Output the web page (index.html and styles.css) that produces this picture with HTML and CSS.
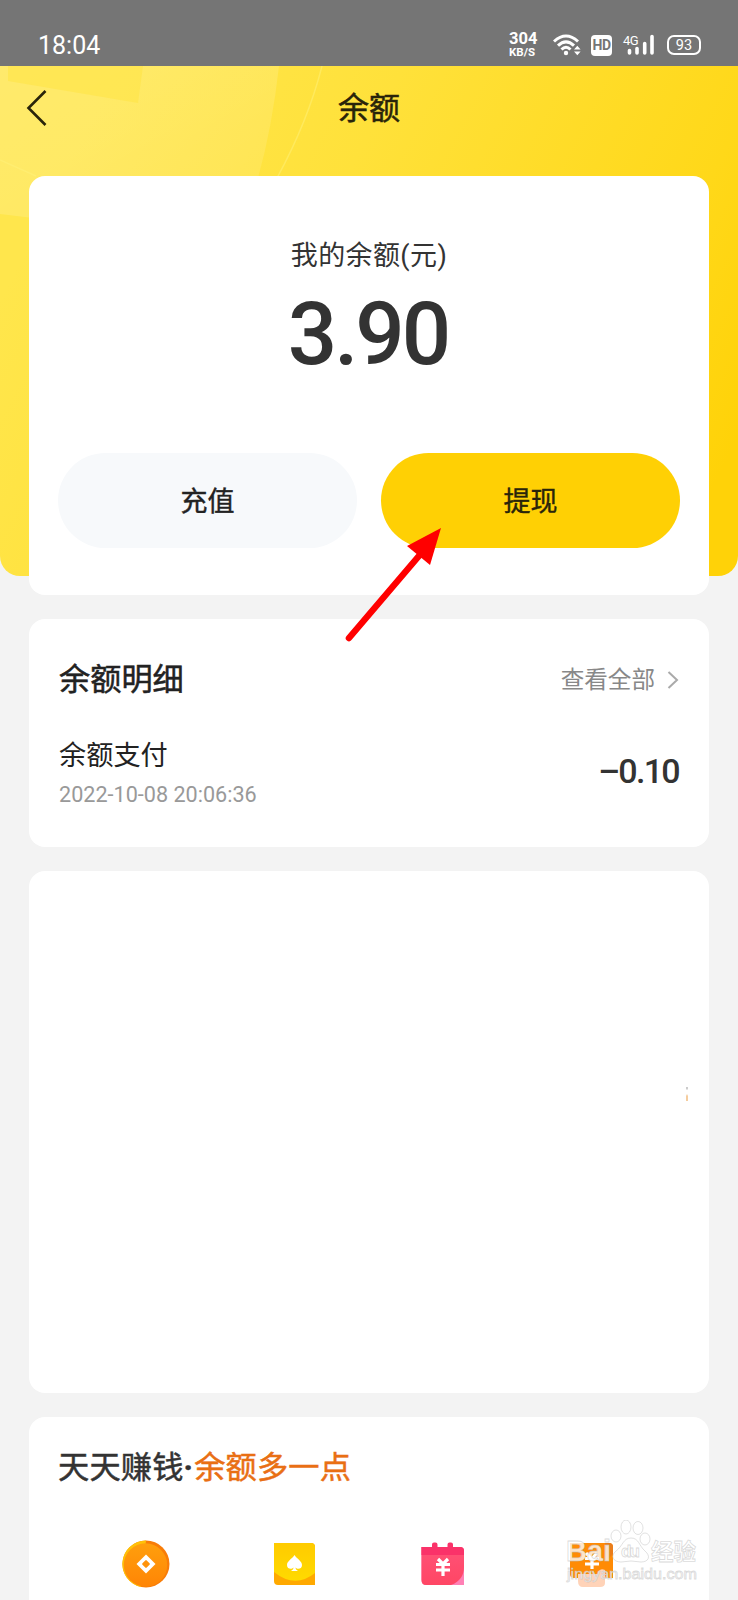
FILE: index.html
```html
<!DOCTYPE html>
<html lang="zh-CN">
<head>
<meta charset="utf-8">
<title>余额</title>
<link rel="stylesheet" href="styles.css">
</head>
<body>
<div class="screen">
  <header class="status">
    <span class="clock">18:04</span>
    <div class="speed"><b class="rate">304</b><b class="unit">KB/S</b></div>
    <svg class="wifi" width="28" height="24" viewBox="0 0 28 24" fill="none" stroke="#fff" stroke-width="3">
      <path d="M1 8.500Q13 -2.500 25 8.500M5 12.700Q13 5 21 12.700M8.500 16.500Q13 12 17.500 16.500"/>
      <circle cx="13" cy="20" r="2.200" fill="#fff" stroke="none"/>
      <path d="M21 16.500L24.300 12.800L27.600 16.500ZM21 18.500L24.300 22.200L27.600 18.500Z" fill="#fff" stroke="none"/>
    </svg>
    <span class="hd">HD</span>
    <div class="signal">
      <span class="net">4G</span>
      <svg width="30" height="22" viewBox="0 0 30 22" stroke="#fff" stroke-width="3.600" stroke-linecap="round"><path d="M5.500 16.500V19M13 14.500V19M20.700 9.500V19M28 2.500V19"/></svg>
    </div>
    <div class="battery">93</div>
  </header>

  <main class="page">
    <svg class="backdrop" width="738" height="510" viewBox="0 0 738 510">
      <defs>
        <linearGradient id="gold" gradientUnits="userSpaceOnUse" x1="120" y1="0" x2="760" y2="330">
          <stop offset="0" stop-color="#ffe64c"/><stop offset=".35" stop-color="#ffe13a"/><stop offset=".8" stop-color="#ffd819"/><stop offset="1" stop-color="#ffd208"/>
        </linearGradient>
        <linearGradient id="glow" x1="0" y1="0" x2="1" y2="1">
          <stop offset="0" stop-color="#fff" stop-opacity=".18"/><stop offset="1" stop-color="#fff" stop-opacity=".09"/>
        </linearGradient>
      </defs>
      <rect width="738" height="510" fill="url(#gold)"/>
      <path d="M0 0H279Q272 62 258 112L100 160L0 148Z" fill="url(#glow)"/>
      <path d="M8 0H143L138 37L8 15Z" fill="#ffe546" opacity=".6"/>
      <path d="M322 0Q308 55 277 112M0 94L36 110" fill="none" stroke="#fff27a" stroke-width="1.500" opacity=".5"/>
    </svg>

    <nav class="nav">
      <svg class="back" width="22" height="38" viewBox="0 0 22 38" fill="none" stroke="#29240a" stroke-width="2.600"><path d="M19.500 2L2.500 19L19.500 36"/></svg>
      <h1 class="title">余额</h1>
    </nav>

    <section class="card balance">
      <p class="label">我的余额(元)</p>
      <p class="amount">3.90</p>
      <div class="actions">
        <button class="btn">充值</button>
        <button class="btn primary">提现</button>
      </div>
      <svg class="pointer" width="98" height="118" viewBox="0 0 98 118"><path d="M5 110L80 22" stroke="#f00" stroke-width="6.500" stroke-linecap="round"/><path d="M97 0L63 18L86 37Z" fill="#f00"/></svg>
    </section>

    <section class="card detail">
      <div class="row">
        <h2 class="heading">余额明细</h2>
        <a class="more">查看全部<svg width="12" height="18" viewBox="0 0 12 18" fill="none" stroke="#aaa" stroke-width="2"><path d="M1.500 1L10 9L1.500 17"/></svg></a>
      </div>
      <div class="row entry">
        <div>
          <p class="name">余额支付</p>
          <p class="date">2022-10-08 20:06:36</p>
        </div>
        <span class="sum">–0.10</span>
      </div>
    </section>

    <section class="card blank"><i class="speck"></i></section>

    <section class="card earn">
      <h2 class="heading slogan">天天赚钱<span class="dot">·</span><span class="accent">余额多一点</span></h2>
      <div class="tiles">
        <svg width="50" height="50" viewBox="0 0 50 50">
          <defs><linearGradient id="coin" x1="0" y1="0" x2="0" y2="1"><stop offset="0" stop-color="#ff9f0d"/><stop offset="1" stop-color="#ff8505"/></linearGradient></defs>
          <circle cx="25" cy="25" r="23.500" fill="#f87c08"/><path d="M25 1.500A23.500 23.500 0 0 0 20 48Z" fill="#ffc107"/><circle cx="24.500" cy="26" r="21.700" fill="url(#coin)"/>
          <path d="M25 15.500L34.500 25L25 34.500L15.500 25Z" fill="#fff"/><rect x="22" y="22" width="6" height="6" rx="1" transform="rotate(45 25 25)" fill="#ff930a"/>
        </svg>
        <svg width="50" height="50" viewBox="0 0 50 50">
          <defs><linearGradient id="ace" x1="0" y1="0" x2="0" y2="1"><stop offset="0" stop-color="#ffcb00"/><stop offset="1" stop-color="#ffda00"/></linearGradient></defs>
          <path d="M4 4H41Q45 4 45 8V46H8Q4 46 4 42Z" fill="#ffa900"/><path d="M4 4H41Q45 4 45 8V34Q25 50 4 33Z" fill="url(#ace)"/>
          <path d="M24.500 16C22 20 17 22 17 26C17 30 21.500 31 23.500 28.500C23.500 30 22.500 31 21 32H28C26.500 31 25.500 30 25.500 28.500C27.500 31 32 30 32 26C32 22 27 20 24.500 16Z" fill="#fff"/>
        </svg>
        <svg width="50" height="50" viewBox="0 0 50 50">
          <defs><linearGradient id="cal" x1="0" y1="0" x2="0" y2="1"><stop offset="0" stop-color="#ff5278"/><stop offset="1" stop-color="#ff4664"/></linearGradient></defs>
          <path d="M14 8.500V5.500Q14 3.500 16 3.500H17.500Q19.500 3.500 19.500 5.500V8.500ZM29.500 8.500V5.500Q29.500 3.500 31.500 3.500H33Q35 3.500 35 5.500V8.500Z" fill="#fa3269"/>
          <path d="M3.500 8H42Q46 8 46 12V46H8Q3.500 46 3.500 41Z" fill="#ff80b5"/><path d="M3.500 8H42Q46 8 46 12V28Q46 41 33 46H8Q3.500 46 3.500 41Z" fill="url(#cal)"/><path d="M3.500 8H42Q46 8 46 12V16H3.500Z" fill="#fa3269"/>
          <path d="M20 20L25 25L30 20M18 25.500H32M18 31H32M25 25V37" fill="none" stroke="#fff" stroke-width="3.200"/>
        </svg>
        <svg width="50" height="50" viewBox="0 0 50 50">
          <path d="M3 4H42Q46 4 46 8V39H7Q3 39 3 35Z" fill="#ff8b05"/><path d="M38 4H42Q46 4 46 8V15L40 21Z" fill="#e97d1c"/>
          <path d="M19 14L24.500 20L30 14M18 19.500H32M18 25H32M25 19V30" fill="none" stroke="#fff" stroke-width="3.200"/>
          <path d="M11 35H31V33Q33 29 38 31V44Q38 48 33 48H16Q11 48 11 42Z" fill="#ffd3b8"/>
        </svg>
      </div>
    </section>
  </main>

  <svg class="mark" width="136" height="66" viewBox="0 0 136 66">
    <g fill="#fff" fill-opacity=".8" stroke="#bbb" stroke-opacity=".55" stroke-width=".8">
      <text class="mark-brand" x="1" y="41" textLength="45" lengthAdjust="spacingAndGlyphs">Bai</text>
      <path d="M66 18C58 18 58 26 51 31C45 36 48 42 56 42Q66 40 76 42C84 42 86 36 80 31C74 26 74 18 66 18Z"/>
      <ellipse cx="51" cy="16" rx="5" ry="6"/><ellipse cx="61" cy="7" rx="5" ry="7"/><ellipse cx="73" cy="8" rx="5" ry="6.500"/><ellipse cx="80" cy="19" rx="5" ry="6"/>
      <text class="mark-du" x="56" y="37" textLength="19">du</text>
      <text class="mark-cn" x="86" y="40">经验</text>
      <text class="mark-url" x="2" y="59" textLength="130" lengthAdjust="spacingAndGlyphs">jingyan.baidu.com</text>
    </g>
  </svg>
</div>
</body>
</html>
```
FILE: styles.css
```css
* { box-sizing: border-box; }
body, h1, h2, p { margin: 0; font-weight: 400; }
body { background: #f3f3f3; font-family: Roboto, "Noto Sans CJK SC", sans-serif; color: #333; }
.screen { position: relative; width: 738px; height: 1600px; overflow: hidden; background: #f3f3f3; }

.status { height: 66px; padding: 24px 37px 0 38px; display: flex; align-items: center; background: #757575; color: #fff; }
.clock { font-size: 25px; line-height: 40px; padding-top: 2px; margin-right: auto; }
.speed { display: flex; flex-direction: column; width: 29px; margin-right: 15px; }
.rate { font-size: 16.500px; line-height: 14px; }
.unit { font-size: 11.500px; line-height: 13px; }
.wifi { margin-right: 10px; }
.hd { width: 21px; height: 21px; margin-right: 12px; border-radius: 4px; background: #fff; color: #757575; font: 700 14px/21px Roboto, sans-serif; letter-spacing: -.5px; text-align: center; }
.signal { position: relative; display: flex; width: 31px; margin-right: 12px; }
.net { position: absolute; left: -1px; top: 0; font-size: 13px; line-height: 14px; letter-spacing: -.5px; }
.battery { width: 34px; height: 20px; border: 2px solid #fff; border-radius: 7px; font: 14.500px/17px Roboto, sans-serif; text-align: center; }

.page { position: relative; padding: 0 29px; }
.backdrop { position: absolute; left: 0; top: 0; border-radius: 0 0 20px 20px; }
.nav { position: relative; height: 110px; display: flex; align-items: flex-start; justify-content: center; padding-top: 21px; }
.back { position: absolute; left: -3px; top: 23px; }
.title { font-size: 31px; line-height: 44px; color: #29240a; -webkit-text-stroke: .5px; }

.card { position: relative; border-radius: 16px; background: #fff; margin-bottom: 24px; padding: 0 29px; }
.balance { height: 419px; padding-top: 60px; text-align: center; }
.label { font-size: 27px; line-height: 40px; letter-spacing: .4px; }
.amount { font-size: 87px; line-height: 100px; margin-top: 8px; margin-left: -2px; font-weight: 500; letter-spacing: -3px; }
.actions { display: flex; gap: 24px; margin-top: 69px; }
.btn { flex: 1; height: 95px; border: 0; border-radius: 48px; background: #f7f9fb; padding: 2px 0 0; font: 27px/40px Roboto, "Noto Sans CJK SC", sans-serif; color: #222; -webkit-text-stroke: .4px; }
.primary { background: #ffd004; color: #29240a; }
.pointer { position: absolute; left: 315px; top: 352px; z-index: 2; }

.detail { height: 228px; padding: 39px 30px 0; }
.row { display: flex; justify-content: space-between; align-items: center; }
.heading { font-size: 31.200px; line-height: 44px; color: #222; -webkit-text-stroke: .5px; }
.more { display: flex; align-items: center; gap: 12px; font-size: 23.600px; line-height: 36px; color: #888; }
.entry { margin-top: 34px; }
.name { font-size: 27.200px; line-height: 40px; color: #222; }
.date { font-size: 21.600px; line-height: 30px; margin-top: 4px; color: #999; }
.sum { font-size: 34px; line-height: 40px; padding-bottom: 5px; font-weight: 500; letter-spacing: -1.700px; }

.blank { height: 522px; }
.speck { position: absolute; left: 657px; top: 216px; width: 2px; height: 14px; background: linear-gradient(#ccc 0 2px, #fff 3px 7px, #f5cd9f 9px); }
.earn { height: 210px; margin-bottom: 0; padding-top: 29px; }
.slogan { letter-spacing: .2px; color: #333; }
.dot { font-weight: 700; }
.accent { margin-left: 1px; color: #e96f14; }
.tiles { display: flex; gap: 98.500px; margin-top: 49px; padding-left: 63px; }
.tiles svg { flex: none; }

.mark { position: absolute; left: 565px; top: 1520px; }
.mark-brand { font: 700 29px "Liberation Sans", sans-serif; }
.mark-du { font: 700 17px "Liberation Sans", sans-serif; }
.mark-cn { font: 700 22.500px "Noto Sans CJK SC", sans-serif; }
.mark-url { font: 15px "Liberation Sans", sans-serif; }
```
